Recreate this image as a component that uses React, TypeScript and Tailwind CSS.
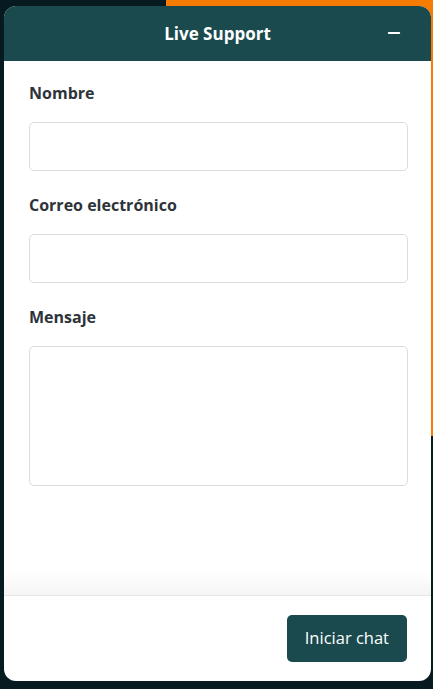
import { Minus } from "lucide-react";

const font = { fontFamily: '"Open Sans", "Noto Sans", sans-serif' };

function Field({ label, tall }: { label: string; tall?: boolean }) {
  return (
    <div className="flex flex-col">
      <label className="text-[16px] font-bold leading-[24px] text-[#2d3339]">{label}</label>
      {tall ? (
        <textarea className="mt-[17px] h-[140px] w-full resize-none rounded-[5px] border border-[#dcdcdc] bg-white outline-none" />
      ) : (
        <input className="mt-[17px] h-[49px] w-full rounded-[5px] border border-[#dcdcdc] bg-white outline-none" />
      )}
    </div>
  );
}

export default function App() {
  return (
    <div className="relative h-[689px] w-[433px] overflow-hidden bg-[#061a1f]" style={font}>
      <div className="absolute left-[166px] top-0 h-[436px] w-[267px] bg-[#f57c00]" />
      <div className="relative ml-[4px] mt-[6px] flex h-[675px] w-[427px] flex-col overflow-hidden rounded-[12px] bg-white">
        <header className="relative flex h-[55px] shrink-0 items-center justify-center bg-[#1a4a4e]">
          <h1 className="text-[17px] font-bold text-white">Live Support</h1>
          <button className="absolute right-[28px] top-[18px] text-white">
            <Minus size={18} strokeWidth={2.5} />
          </button>
        </header>
        <div className="flex flex-1 flex-col gap-[22px] pl-[25px] pr-[23px] pt-[20px]">
          <Field label="Nombre" />
          <Field label="Correo electrónico" />
          <Field label="Mensaje" tall />
        </div>
        <div className="h-[24px] shrink-0 bg-gradient-to-b from-white to-[#f5f5f5]" />
        <footer className="flex h-[86px] shrink-0 items-center justify-end border-t border-[#e6e6e6] px-[24px]">
          <button className="h-[47px] rounded-[5px] bg-[#1a4a4e] px-[18px] text-[16.5px] text-white">
            Iniciar chat
          </button>
        </footer>
      </div>
    </div>
  );
}
